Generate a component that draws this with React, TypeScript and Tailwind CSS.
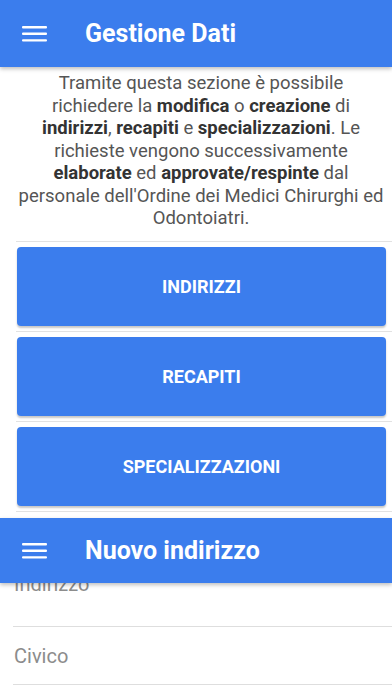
import React from 'react';

const BLUE = 'bg-[#3b7ded]';

function MenuIcon() {
  return (
    <svg width="25" height="16" viewBox="0 0 25 16" className="shrink-0">
      <rect x="0" y="0" width="25" height="2.4" rx="1" fill="#fff" />
      <rect x="0" y="6.6" width="25" height="2.4" rx="1" fill="#fff" />
      <rect x="0" y="13.2" width="25" height="2.4" rx="1" fill="#fff" />
    </svg>
  );
}

function Toolbar({ title, height }: { title: string; height: string }) {
  return (
    <div
      className={`${BLUE} ${height} relative z-10 flex items-center pl-[22px] shadow-[0_2px_4px_rgba(0,0,0,0.25)]`}
    >
      <MenuIcon />
      <h1 className="ml-[38px] text-[25px] font-bold leading-none text-white">{title}</h1>
    </div>
  );
}

const actions = ['INDIRIZZI', 'RECAPITI', 'SPECIALIZZAZIONI'];

export default function App() {
  return (
    <div
      className="h-[696px] w-[392px] overflow-hidden bg-white"
      style={{ fontFamily: 'Roboto, "Noto Sans", sans-serif' }}
    >
      {/* prima schermata */}
      <div className="h-[518px]">
        <Toolbar title="Gestione Dati" height="h-[67px]" />
        <p className="mt-[5px] whitespace-nowrap pl-[14px] pr-[4px] text-center text-[18.5px] leading-[22.5px] text-[#555]">
          Tramite questa sezione è possibile
          <br />
          richiedere la <b className="text-[#333]">modifica</b> o{' '}
          <b className="text-[#333]">creazione</b> di
          <br />
          <b className="text-[#333]">indirizzi</b>, <b className="text-[#333]">recapiti</b> e{' '}
          <b className="text-[#333]">specializzazioni</b>. Le
          <br />
          richieste vengono successivamente
          <br />
          <b className="text-[#333]">elaborate</b> ed{' '}
          <b className="text-[#333]">approvate/respinte</b> dal
          <br />
          personale dell'Ordine dei Medici Chirurghi ed
          <br />
          Odontoiatri.
        </p>
        <ul className="ml-4 mt-[11px] border-t border-[#e2e2e2]">
          {actions.map((a) => (
            <li key={a} className="border-b border-[#e2e2e2] py-[5px] pl-[1px] pr-[6px]">
              <button
                className={`${BLUE} flex h-[79px] w-full items-center justify-center rounded-[4px] text-[18px] font-bold text-white shadow-[0_2px_2px_rgba(0,0,0,0.22)]`}
              >
                {a}
              </button>
            </li>
          ))}
        </ul>
      </div>

      {/* seconda schermata */}
      <div>
        <Toolbar title="Nuovo indirizzo" height="h-[65px]" />
        <div className="-mt-[10px] ml-[13px]">
          <div className="h-[54px] border-b border-[#dedede] pl-[1px]">
            <span className="block text-[20px] leading-[22px] text-[#8c8c8c]">Indirizzo</span>
          </div>
          <div className="flex h-[58px] items-center border-b border-[#dedede] pl-[1px]">
            <span className="text-[20px] leading-none text-[#8c8c8c]">Civico</span>
          </div>
        </div>
      </div>
    </div>
  );
}
